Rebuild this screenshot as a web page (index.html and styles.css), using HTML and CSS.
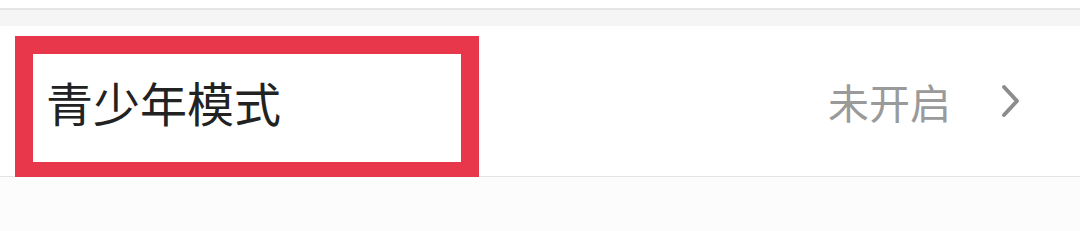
FILE: index.html
```html
<!DOCTYPE html>
<html lang="zh-CN">
<head>
  <meta charset="UTF-8" />
  <title>设置</title>
  <link rel="stylesheet" href="styles.css">
</head>
<body>
  <!-- bande grise du haut -->
  <div class="top-gap"></div>

  <!-- ligne de réglage -->
  <div class="setting-row">
    <span class="setting-label">青少年模式</span>
    <div class="setting-value">
      <span class="value-text">未开启</span>
      <svg class="chevron" width="20" height="34" viewBox="0 0 20 34">
        <path d="M3 3 L16 17 L3 31" fill="none" stroke="#8c8c8c" stroke-width="4" stroke-linecap="round" stroke-linejoin="round"/>
      </svg>
    </div>
    <!-- cadre rouge d'annotation -->
    <div class="highlight"></div>
  </div>
</body>
</html>
```

FILE: styles.css
```css
/* --- Base --- */
body {
  margin: 0;
  background: #fcfcfc;
  font-family: "Noto Sans CJK SC", "Noto Sans", sans-serif;
}

/* --- Bande du haut --- */
.top-gap {
  height: 18px;
  background: #f5f5f5;
  border-top: 8px solid #ffffff;
  box-shadow: inset 0 2px 0 #e6e6e6;
}

/* --- Ligne de réglage --- */
.setting-row {
  position: relative;
  height: 150px;
  background: #ffffff;
  border-bottom: 1px solid #e4e4e4;
  display: flex;
  align-items: center;
  justify-content: space-between;
  padding: 0 59px 0 46px;
}

.setting-label {
  font-size: 47px;
  color: #222222;
  line-height: 1;
}

.setting-value {
  display: flex;
  align-items: center;
  gap: 50px;
}

.value-text {
  font-size: 41px;
  color: #9a9a9a;
  line-height: 1;
}

.chevron {
  display: block;
}

/* --- Annotation --- */
.highlight {
  position: absolute;
  left: 15px;
  top: 10px;
  width: 428px;
  height: 108px;
  border: 18px solid #e8364b;
}
```
